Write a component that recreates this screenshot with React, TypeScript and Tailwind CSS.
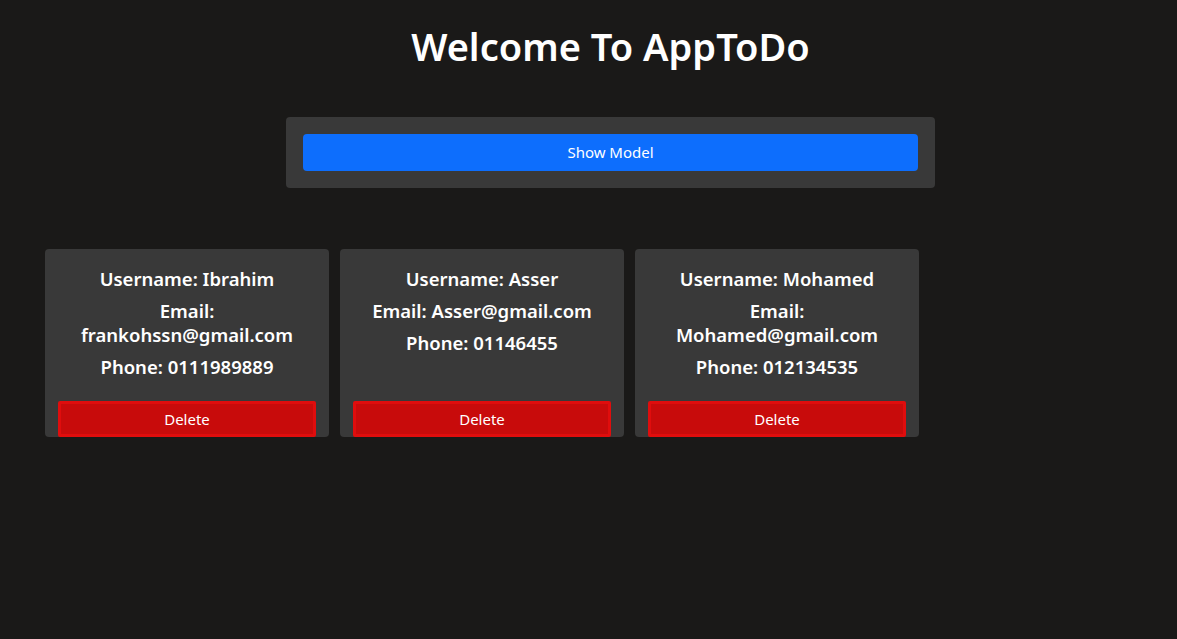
type User = {
  username: string;
  email: string;
  phone: string;
};

const users: User[] = [
  { username: "Ibrahim", email: "frankohssn@gmail.com", phone: "0111989889" },
  { username: "Asser", email: "Asser@gmail.com", phone: "01146455" },
  { username: "Mohamed", email: "Mohamed@gmail.com", phone: "012134535" },
];

const UserCard = ({ user }: { user: User }) => (
  <div className="w-[284px] flex flex-col bg-[#393939] rounded-[4px] px-[13px] pt-[18px] text-center">
    <p className="text-[18.5px] leading-[24px] font-semibold text-white">
      Username: {user.username}
    </p>
    <p className="mt-2 text-[18.5px] leading-[24px] font-semibold text-white">
      Email: {user.email}
    </p>
    <p className="mt-2 mb-[22px] text-[18.5px] leading-[24px] font-semibold text-white">
      Phone: {user.phone}
    </p>
    <button className="mt-auto h-[36px] w-full bg-[#c80b0b] border-[3px] border-[#e00d0d] rounded-[2px] text-white text-[15px]">
      Delete
    </button>
  </div>
);

export default function App() {
  return (
    <div
      className="min-h-[639px] bg-[#1a1918] text-white"
      style={{ fontFamily: '"Noto Sans", "Open Sans", sans-serif' }}
    >
      <div className="ml-[286px] w-[649px] pt-[20px]">
        <h1 className="text-center text-[38px] leading-[52px] font-semibold">
          Welcome To AppToDo
        </h1>
        <div className="mt-[45px] bg-[#393939] rounded-[4px] p-[17px]">
          <button className="w-full h-[37px] bg-[#0d6efd] rounded-[4px] text-white text-[15px]">
            Show Model
          </button>
        </div>
      </div>
      <div className="ml-[45px] mt-[61px] flex gap-[11px] items-stretch">
        {users.map((u) => (
          <UserCard key={u.username} user={u} />
        ))}
      </div>
    </div>
  );
}
